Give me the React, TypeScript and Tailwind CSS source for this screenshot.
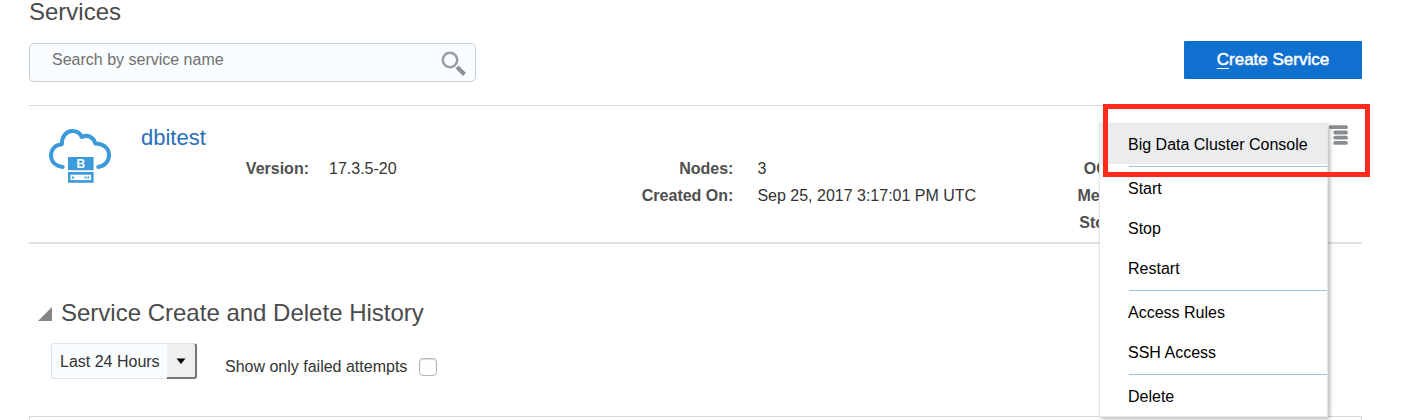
import { useState } from "react"

type Fact = { label: string; value: string }

const MENU_GROUPS = [
  ["Big Data Cluster Console"],
  ["Start", "Stop", "Restart"],
  ["Access Rules", "SSH Access"],
  ["Delete"],
]

function ServiceIcon() {
  return (
    <svg className="h-14 w-[62px] shrink-0" viewBox="0 0 62 56" fill="none" aria-hidden>
      <path
        d="M13.7 38.9C6.5 37.9 2 33.4 2 27.4C2 21 6.500 16.600 12.900 16.200C12.600 8.500 17.200 3 23.500 3C28 3 31.200 5.300 32.700 8.900C38.600 6.200 45 9.300 46.200 15.400C54 15 60 20.400 60 27.200C60 33.500 55.500 38 49.300 38.900"
        stroke="#3b9ad9"
        strokeWidth="4"
        strokeLinecap="round"
        strokeLinejoin="round"
      />
      <rect x="19" y="29" width="25.600" height="13.200" rx="0.600" fill="#3b9ad9" />
      <text
        x="31.800"
        y="39.800"
        fill="#fff"
        textAnchor="middle"
        fontFamily="Liberation Sans, sans-serif"
        fontSize="12"
        fontWeight="700"
      >
        B
      </text>
      <rect x="19" y="44" width="25.600" height="10.800" rx="0.600" fill="#3b9ad9" />
      <rect x="21.500" y="46.700" width="20.600" height="5.400" fill="#fff" />
      <path d="M23 48.400h2v2h-2zM35.600 48.400h1.800v2h-1.800zM38.400 48.400h1.800v2h-1.800z" fill="#3b9ad9" />
    </svg>
  )
}

function Facts({ items, gap }: { items: Fact[]; gap: string }) {
  return (
    <dl className="leading-[27px]">
      {items.map((item) => (
        <div key={item.label} className="flex">
          <dt className="w-[168px] shrink-0 text-right font-bold text-[#4f4f4f]">{item.label}</dt>
          <dd className={`whitespace-nowrap text-[#333] ${gap}`}>{item.value}</dd>
        </div>
      ))}
    </dl>
  )
}

function ServiceMenu() {
  return (
    <div className="relative pt-0.5">
      <button type="button" aria-label="Manage this service" className="block">
        <svg className="h-5 w-[19px]" viewBox="0 0 19 20" stroke="#8a8d8f" strokeWidth="3.800" strokeLinecap="round" aria-hidden>
          <path d="M2 2.200H17M6.200 7.500H17M6.200 12.700H17M6.200 17.900H17" />
        </svg>
      </button>

      <div
        role="menu"
        className="absolute top-0 right-full z-10 mr-px w-[229px] border border-[#e4e6e8] bg-white shadow-[2px_2px_4px_rgba(0,0,0,0.28)]"
      >
        {MENU_GROUPS.map((group, i) => (
          <div key={group[0]}>
            {i > 0 && (
              <div className="py-px pl-[29px]">
                <hr className="mt-px border-[#9dbfe0]" />
              </div>
            )}
            {group.map((name) => (
              <button
                key={name}
                type="button"
                role="menuitem"
                className={`block h-10 w-full pt-0.5 pl-7 text-left whitespace-nowrap text-black ${i === 0 ? "bg-[#ebecee]" : ""}`}
              >
                {name}
              </button>
            ))}
          </div>
        ))}
      </div>

      <div className="pointer-events-none absolute -top-[19px] -right-[22px] z-20 h-[73px] w-[267px] border-5 border-[#ff2a1c]" />
    </div>
  )
}

export default function App() {
  const [failedOnly, setFailedOnly] = useState(false)

  return (
    <main className="bg-white pr-[66px] pl-[29px] font-['Liberation_Sans',Arial,sans-serif] text-base text-[#333]">
      <h1 className="text-2xl leading-6 text-[#4a4a4a]">Services</h1>

      <div className="flex items-start justify-between pt-[17px]">
        <form className="mt-0.5 flex h-[39px] w-[447px] rounded-[5px] border border-[#c3cdd5] bg-[#fafdff]">
          <input
            type="text"
            aria-label="Search by service name"
            placeholder="Search by service name"
            className="min-w-0 flex-1 pb-1.5 pl-[22px] outline-none placeholder:text-[#707070]"
          />
          <button type="button" aria-label="Search" className="px-[7px]">
            <svg className="h-7 w-7" viewBox="0 0 28 28" fill="none" aria-hidden>
              <circle cx="10" cy="11" r="7.200" stroke="#9a9d9f" strokeWidth="2.400" />
              <path d="M17 18L24.500 25.500" stroke="#8d9092" strokeWidth="4.200" />
            </svg>
          </button>
        </form>
        <button type="button" className="h-[38px] w-[178px] rounded-[1px] bg-[#1070cf] text-[17px] text-white [-webkit-text-stroke:0.5px_white]">
          <span className="underline underline-offset-3">C</span>reate Service
        </button>
      </div>

      <section className="mt-[23px] flex h-[139px] items-start border-t border-b-2 border-t-[#d3dde5] border-b-[#dbe2e8] pr-3.5 pl-5">
        <div className="pt-[22px]">
          <ServiceIcon />
        </div>
        <div className="min-w-0 flex-1 pt-5 pl-[30px]">
          <a href="#dbitest" className="block w-fit text-[22px] leading-6 text-[#2a6ebb]">
            dbitest
          </a>
          <div className="mt-[5px] grid grid-cols-[427fr_406fr_355fr]">
            <Facts gap="pl-5" items={[{ label: "Version:", value: "17.3.5-20" }]} />
            <Facts
              gap="pl-6"
              items={[
                { label: "Nodes:", value: "3" },
                { label: "Created On:", value: "Sep 25, 2017 3:17:01 PM UTC" },
              ]}
            />
            <Facts
              gap="pl-5"
              items={[
                { label: "OCPUs:", value: "" },
                { label: "Memory:", value: "" },
                { label: "Storage:", value: "" },
              ]}
            />
          </div>
        </div>
        <div className="pt-[17px]">
          <ServiceMenu />
        </div>
      </section>

      <section className="pt-[57px]">
        <h2 className="flex items-center gap-[9px] pl-[9px] text-2xl leading-6 text-[#4a4a4a]">
          <svg className="mt-0.5 h-3.5 w-3.5" viewBox="0 0 14 14" aria-hidden>
            <path d="M14 0V14H0Z" fill="#858585" />
          </svg>
          Service Create and Delete History
        </h2>

        <div className="mt-[18px] flex items-end gap-7 pl-[22px]">
          <div className="relative h-9 w-[146px]">
            <select
              aria-label="History period"
              className="h-full w-full appearance-none rounded-[3px] border border-[#dde4ea] bg-[#fafdff] pt-0.5 pl-2 text-[#333]"
            >
              <option>Last 24 Hours</option>
            </select>
            <span className="pointer-events-none absolute inset-y-0 right-0 flex w-[30px] items-center justify-center rounded-r-[3px] border-t border-r-2 border-b-2 border-t-[#e3e3e3] border-r-[#757575] border-b-[#757575] bg-[#efefef]">
              <svg className="h-1.5 w-2.5" viewBox="0 0 10 6" aria-hidden>
                <path d="M0.500 0.500H9.500L5 6Z" fill="#000" />
              </svg>
            </span>
          </div>
          <label className="flex h-6 items-center gap-3">
            Show only failed attempts
            <input
              type="checkbox"
              checked={failedOnly}
              onChange={(e) => setFailedOnly(e.target.checked)}
              className="h-[18px] w-[18px] appearance-none rounded-[4px] border border-[#b5b5b5] bg-white shadow-[inset_0_1px_1px_rgba(0,0,0,0.12)] checked:bg-[#1070cf]"
            />
          </label>
        </div>

        <div className="mt-[37px] h-1 border-x border-t border-[#d3dde5]" />
      </section>
    </main>
  )
}
